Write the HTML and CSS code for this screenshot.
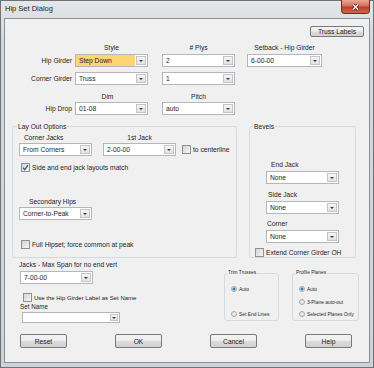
FILE: index.html
```html
<!DOCTYPE html>
<html lang="en">
<head>
  <meta charset="UTF-8">
  <title>Hip Set Dialog</title>
  <link rel="stylesheet" href="styles.css">
</head>
<body>

  <div class="window">
    <div class="titlebar">
      <span class="title">Hip Set Dialog</span>
      <span class="close">
        <svg width="11" height="8" viewBox="0 0 11 8">
          <path d="M3 1.5 L8 6.5 M8 1.5 L3 6.5" stroke="#5a1d14" stroke-width="2.8" />
          <path d="M3 1.5 L8 6.5 M8 1.5 L3 6.5" stroke="#fff" stroke-width="1.4" />
        </svg>
      </span>
    </div>

    <div class="client">
      <div class="toolbar"><span class="btn truss">Truss Labels</span></div>

      <div class="row heads">
        <span class="lbl"></span>
        <span class="col1">Style</span>
        <span class="col2"># Plys</span>
        <span class="col3">Setback - Hip Girder</span>
      </div>
      <div class="row fields">
        <span class="lbl">Hip Girder</span>
        <div class="combo col1 hot"><span class="val">Step Down</span><i class="arrow"></i></div>
        <div class="combo col2"><span class="val">2</span><i class="arrow"></i></div>
        <div class="combo col3"><span class="val">6-00-00</span><i class="arrow"></i></div>
      </div>
      <div class="row fields second">
        <span class="lbl">Corner Girder</span>
        <div class="combo col1"><span class="val">Truss</span><i class="arrow"></i></div>
        <div class="combo col2"><span class="val">1</span><i class="arrow"></i></div>
      </div>
      <div class="row heads low">
        <span class="lbl"></span>
        <span class="col1 dim">Dim</span>
        <span class="col2">Pitch</span>
      </div>
      <div class="row fields">
        <span class="lbl">Hip Drop</span>
        <div class="combo col1"><span class="val">01-08</span><i class="arrow"></i></div>
        <div class="combo col2"><span class="val">auto</span><i class="arrow"></i></div>
      </div>

      <div class="groups">
        <fieldset class="group layout">
          <legend>Lay Out Options</legend>
          <div class="lo-heads">
            <span class="h-corner">Corner Jacks</span>
            <span class="h-first">1st Jack</span>
          </div>
          <div class="lo-combos">
            <div class="combo w73 gap-r"><span class="val">From Corners</span><i class="arrow"></i></div>
            <div class="combo w73"><span class="val">2-00-00</span><i class="arrow"></i></div>
            <div class="check center"><span class="box"></span>to centerline</div>
          </div>
          <div class="check side">
            <span class="box">
              <svg width="7" height="7" viewBox="0 0 7 7"><path d="M1 3.6 L2.7 5.6 L6 1.2" fill="none" stroke="#3c5c88" stroke-width="1.3" /></svg>
            </span>Side and end jack layouts match
          </div>
          <div class="sub-head">Secondary Hips</div>
          <div class="combo w73 indent"><span class="val">Corner-to-Peak</span><i class="arrow"></i></div>
          <div class="check full"><span class="box"></span>Full Hipset; force common at peak</div>
        </fieldset>

        <fieldset class="group bevels">
          <legend>Bevels</legend>
          <div class="cap end">End Jack</div>
          <div class="combo w73 bevel"><span class="val">None</span><i class="arrow"></i></div>
          <div class="cap side-j">Side Jack</div>
          <div class="combo w73 bevel"><span class="val">None</span><i class="arrow"></i></div>
          <div class="cap corner">Corner</div>
          <div class="combo w73 bevel"><span class="val">None</span><i class="arrow"></i></div>
          <div class="check extend"><span class="box"></span>Extend Corner Girder OH</div>
        </fieldset>
      </div>

      <div class="lower">
        <div class="lower-left">
          <div class="jacks">Jacks - Max Span for no end vert</div>
          <div class="combo w73 span"><span class="val">7-00-00</span><i class="arrow"></i></div>
          <div class="check use"><span class="box"></span>Use the Hip Girder Label as Set Name</div>
          <div class="setname">Set Name</div>
          <div class="combo set-combo"><span class="val"></span><i class="arrow"></i></div>
        </div>

        <fieldset class="mini trim">
          <legend>Trim Trusses</legend>
          <div class="radio-row first"><span class="radio on"></span>Auto</div>
          <div class="radio-row far"><span class="radio"></span>Set End Lines</div>
        </fieldset>

        <fieldset class="mini profile">
          <legend>Profile Planes</legend>
          <div class="radio-row first"><span class="radio on"></span>Auto</div>
          <div class="radio-row next"><span class="radio"></span>3-Plane auto-out</div>
          <div class="radio-row last"><span class="radio"></span>Selected Planes Only</div>
        </fieldset>
      </div>

      <div class="actions">
        <span class="btn">Reset</span>
        <span class="btn">OK</span>
        <span class="btn">Cancel</span>
        <span class="btn">Help</span>
      </div>
    </div>
  </div>

</body>
</html>
```

FILE: styles.css
```css
* {
  box-sizing: border-box;
}
body {
  margin: 0;
  background: #fff;
  font-family: "Liberation Sans", Arial, sans-serif;
  font-size: 6.7px;
  color: #1c1c1c;
}
.window {
  width: 374px;
  height: 368px;
  border: 1px solid #6f7378;
  background: linear-gradient(#e4e6e9, #d4d7db 40px, #cfd2d6);
  display: flex;
  flex-direction: column;
}
.titlebar {
  height: 17px;
  display: flex;
  align-items: flex-start;
}
.title {
  margin: 3px 0 0 4px;
  font-size: 7.5px;
  line-height: 10px;
  color: #1e1e1e;
}
.close {
  margin: -1px 3px 0 auto;
  width: 29px;
  height: 14px;
  border: 1px solid #6e2b20;
  border-top: none;
  border-radius: 0 0 4px 4px;
  background: linear-gradient(#e9a898, #d4705c 45%, #c03d28 55%, #d1664e);
  display: flex;
  align-items: center;
  justify-content: center;
}
.client {
  margin-left: 3px;
  width: 366px;
  height: 345px;
  border: 1px solid #8b9097;
  background: #f0f0f0;
}

/* buttons */
.btn {
  display: flex;
  align-items: center;
  justify-content: center;
  width: 47px;
  height: 14px;
  border: 1px solid #7a7a7a;
  border-radius: 2px;
  background: linear-gradient(#f4f4f4, #ececec 48%, #dcdcdc 52%, #d0d0d0);
  color: #1a1a1a;
}
.toolbar {
  margin-top: 7px;
  display: flex;
  justify-content: flex-end;
  padding-right: 5px;
}
.btn.truss {
  width: 54px;
  height: 11px;
}

/* combos */
.combo {
  display: flex;
  align-items: center;
  height: 13px;
  border: 1px solid #b3b6bb;
  background: #fff;
}
.combo .val {
  flex: 1;
  padding-left: 3px;
  white-space: nowrap;
  overflow: hidden;
}
.combo.hot .val {
  align-self: stretch;
  display: flex;
  align-items: center;
  background: #fdd571;
}
.combo .arrow {
  width: 10px;
  height: 9px;
  margin: 0 1px;
  border: 1px solid #c3c5c8;
  background: linear-gradient(#f6f6f6, #e1e1e1);
  display: flex;
  align-items: center;
  justify-content: center;
}
.combo .arrow::after {
  content: "";
  border-left: 2px solid transparent;
  border-right: 2px solid transparent;
  border-top: 2px solid #3a3a3a;
}
.w73 {
  width: 73px;
}

/* top field grid */
.row {
  display: flex;
  align-items: center;
}
.lbl {
  width: 67px;
  margin-right: 3px;
  text-align: right;
}
.col1 {
  width: 73px;
  margin-right: 14px;
}
.col2 {
  width: 73px;
  margin-right: 12px;
}
.col3 {
  width: 75px;
}
.heads {
  margin-top: 5px;
  height: 11px;
}
.heads span {
  text-align: center;
}
.heads.low {
  margin-top: 6px;
  height: 10px;
}
.heads .dim {
  padding-right: 8px;
}
.fields {
  margin-top: 1px;
  height: 13px;
}
.fields.second {
  margin-top: 5px;
}

/* group boxes */
fieldset {
  margin: 0;
  padding: 0;
  min-width: 0;
  border: 1px solid #d3dbe1;
  border-radius: 3px;
}
.groups {
  display: flex;
  margin-top: 7px;
  padding-left: 7px;
  gap: 12px;
  height: 136px;
}
.group legend {
  font-size: 6.7px;
  line-height: 9px;
  padding: 0 1px;
  margin-left: 4px;
}
.layout {
  width: 225px;
}
.bevels {
  width: 107px;
}
.bevels legend {
  margin-left: 3px;
}
.lo-heads {
  display: flex;
  height: 12px;
  align-items: center;
}
.h-corner {
  width: 90px;
  padding-left: 11px;
}
.h-first {
  width: 73px;
  text-align: center;
}
.lo-combos {
  display: flex;
  align-items: center;
  height: 13px;
  margin-left: 6px;
}
.gap-r {
  margin-right: 11px;
}

/* checkboxes */
.check {
  display: flex;
  align-items: center;
  gap: 2px;
  height: 9px;
  white-space: nowrap;
}
.check .box {
  width: 9px;
  height: 9px;
  flex: none;
  border: 1px solid #8e9093;
  background: linear-gradient(135deg, #d4d4d4, #f6f6f6);
  display: flex;
  align-items: center;
  justify-content: center;
}
.check.center {
  margin-left: 6px;
}
.check.side {
  margin: 7px 0 0 8px;
}
.sub-head {
  margin-top: 25px;
  height: 10px;
  line-height: 10px;
  padding-left: 16px;
}
.indent {
  margin-left: 6px;
}
.check.full {
  margin: 20px 0 0 8px;
}
.cap {
  height: 10px;
  line-height: 10px;
}
.cap.end {
  margin-top: 29px;
  padding-left: 21px;
}
.cap.side-j {
  margin-top: 6px;
  padding-left: 18px;
}
.cap.corner {
  margin-top: 5px;
  padding-left: 17px;
}
.bevel {
  margin: 1px 0 0 16px;
}
.check.extend {
  margin: 5px 0 0 5px;
}

/* lower part */
.lower {
  display: flex;
  height: 76px;
}
.lower-left {
  width: 219px;
  padding-left: 14px;
}
.jacks {
  margin-top: 2px;
  height: 10px;
  line-height: 10px;
}
.span {
  margin: 1px 0 0 1px;
}
.check.use {
  margin: 9px 0 0 4px;
  font-size: 6px;
}
.setname {
  height: 9px;
  line-height: 9px;
  margin-left: 1px;
  font-size: 6.3px;
}
.set-combo {
  width: 98px;
  height: 11px;
  margin: 1px 0 0 3px;
}
.set-combo .arrow {
  height: 7px;
  width: 8px;
}
.mini {
  margin-top: 12px;
  height: 51px;
  font-size: 4.9px;
  color: #2a2a2a;
}
.mini legend {
  line-height: 6px;
  padding: 0 1px;
  margin-left: 2px;
}
.trim {
  width: 55px;
  margin-right: 13px;
}
.profile {
  width: 67px;
}
.radio-row {
  display: flex;
  align-items: center;
  gap: 2px;
  height: 8px;
  margin-left: 6px;
  white-space: nowrap;
}
.radio-row.first {
  margin-top: 9px;
}
.radio-row.far {
  margin-top: 17px;
}
.radio-row.next {
  margin-top: 5px;
}
.radio-row.last {
  margin-top: 4px;
}
.radio {
  width: 6px;
  height: 6px;
  border-radius: 50%;
  border: 1px solid #a4a8ad;
  background: radial-gradient(circle, #f6f6f6, #d8dadd);
}
.radio.on {
  background: radial-gradient(circle, #2f6fb0 0, #3f86c8 1.2px, #dfe7ef 1.8px);
}
.actions {
  display: flex;
  margin-left: 15px;
  gap: 48px;
}
```
